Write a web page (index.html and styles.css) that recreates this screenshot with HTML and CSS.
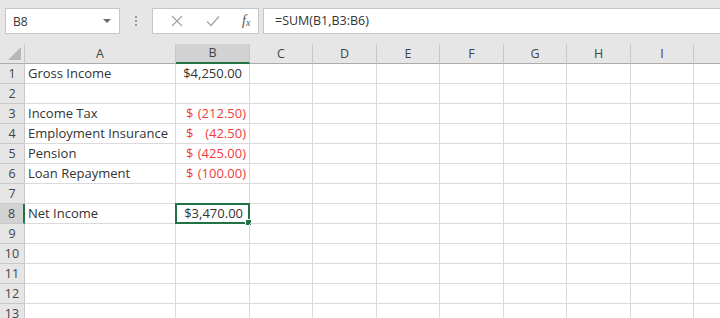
FILE: index.html
```html
<html>
    <head>
        <link rel="stylesheet" href="styles.css">
    </head>
    <body>
        <div class="toolbar">
            <div class="namebox">
                <span>B8</span>
                <svg class="arrow" width="8" height="4" viewBox="0 0 8 4"><path d="M0 0 L8 0 L4 4 Z" fill="#6a6a6a"/></svg>
            </div>
            <div class="grip">
                <i></i><i></i><i></i>
            </div>
            <div class="buttons">
                <svg class="btn" width="12" height="12" viewBox="0 0 12 12"><path d="M1 1 L11 11 M11 1 L1 11" stroke="#a6a6a6" stroke-width="1.3" fill="none"/></svg>
                <svg class="btn" width="14" height="12" viewBox="0 0 14 12"><path d="M1 6.5 L5 10.5 L13 1.5" stroke="#a6a6a6" stroke-width="1.4" fill="none"/></svg>
                <span class="fx">f<sub>x</sub></span>
            </div>
            <div class="formula">=SUM(B1,B3:B6)</div>
        </div>

        <div class="sheet">
            <div class="row head">
                <div class="cell rh corner"><span class="tri"></span></div>
                <div class="cell a">A</div>
                <div class="cell b sel">B</div>
                <div class="cell c">C</div>
                <div class="cell d">D</div>
                <div class="cell c">E</div>
                <div class="cell d">F</div>
                <div class="cell c">G</div>
                <div class="cell d">H</div>
                <div class="cell c">I</div>
                <div class="cell last"></div>
            </div>
            <div id="body"></div>
        </div>

        <script>
            const data = [
                ['Gross Income', {v: '$4,250.00'}],
                ['', null],
                ['Income Tax', {neg: '(212.50)'}],
                ['Employment Insurance', {neg: '(42.50)'}],
                ['Pension', {neg: '(425.00)'}],
                ['Loan Repayment', {neg: '(100.00)'}],
                ['', null],
                ['Net Income', {v: '$3,470.00', active: true}],
                ['', null],
                ['', null],
                ['', null],
                ['', null],
                ['', null]
            ]

            const body = document.querySelector('#body')
            let html = ''
            data.forEach((row, i) => {
                const [label, val] = row
                const active = val && val.active
                let bcell = ''
                if (val && val.neg) {
                    bcell = `<div class="cell b neg"><span>$</span><span>${val.neg}</span></div>`
                } else if (val) {
                    bcell = `<div class="cell b num${active ? ' active' : ''}">${val.v}<i class="handle"></i></div>`
                } else {
                    bcell = `<div class="cell b"></div>`
                }
                html += `<div class="row">
                    <div class="cell rh${active ? ' sel' : ''}">${i + 1}</div>
                    <div class="cell a txt">${label}</div>
                    ${bcell}
                    <div class="cell c"></div><div class="cell d"></div>
                    <div class="cell c"></div><div class="cell d"></div>
                    <div class="cell c"></div><div class="cell d"></div>
                    <div class="cell c"></div><div class="cell last"></div>
                </div>`
            })
            body.innerHTML = html
        </script>
    </body>
</html>
```

FILE: styles.css
```css
body{
    margin: 0;
    width: 720px;
    height: 318px;
    overflow: hidden;
    background: #fff;
    font-family: 'Open Sans', 'Liberation Sans', sans-serif;
}

.toolbar{
    display: flex;
    align-items: center;
    height: 44px;
    padding: 0 0 0 5px;
    background: #e6e6e6;
    box-sizing: border-box;
}

.namebox{
    width: 115px;
    height: 26px;
    background: #fff;
    border: 1px solid #c6c6c6;
    box-sizing: border-box;
    display: flex;
    align-items: center;
    justify-content: space-between;
    padding: 0 8px 0 7px;
    font-size: 12px;
    color: #333;
    margin-bottom: 2px;
}

.grip{
    width: 32px;
    display: flex;
    flex-direction: column;
    align-items: center;
    gap: 2px;
    margin-bottom: 2px;
}
.grip i{
    width: 2px;
    height: 2px;
    background: #9a9a9a;
}

.buttons{
    width: 107px;
    height: 26px;
    background: #fff;
    border: 1px solid #c6c6c6;
    box-sizing: border-box;
    display: flex;
    align-items: center;
    padding-left: 18px;
    margin-bottom: 2px;
}
.btn{
    margin-right: 23px;
}
.btn + .btn{
    margin-right: 22px;
}
.fx{
    font-family: 'Liberation Serif', 'DejaVu Serif', serif;
    font-style: italic;
    font-size: 14px;
    color: #555;
    line-height: 1;
}
.fx sub{
    font-size: 10px;
    vertical-align: -1px;
}

.formula{
    flex-grow: 1;
    height: 26px;
    margin-left: 4px;
    background: #fff;
    border: 1px solid #c6c6c6;
    border-right: none;
    box-sizing: border-box;
    padding-left: 11px;
    font-size: 12.5px;
    line-height: 24px;
    color: #333;
    margin-bottom: 2px;
}

.row{
    display: flex;
    height: 20px;
}

.cell{
    flex-shrink: 0;
    height: 20px;
    box-sizing: border-box;
    border-right: 1px solid #dadada;
    border-bottom: 1px solid #dadada;
    font-size: 13px;
    line-height: 19px;
    color: #333;
    white-space: nowrap;
    position: relative;
}

.rh{ width: 25px; background: #e6e6e6; border-color: #c8c8c8; text-align: center; font-size: 12.5px; color: #444; }
.a{ width: 151px; }
.b{ width: 74px; }
.c{ width: 63px; }
.d{ width: 64px; }
.last{ flex-grow: 1; border-right: none; }

.head .cell{
    background: #e6e6e6;
    border-right-color: #c8c8c8;
    border-bottom-color: #ababab;
    text-align: center;
    font-size: 12.5px;
    color: #444;
}
.head .sel{
    background: #d2d2d2;
    border-bottom: 2px solid #217346;
    line-height: 18px;
}
.rh.sel{
    background: #d2d2d2;
    border-right: 2px solid #217346;
}

.corner{ position: relative; }
.tri{
    position: absolute;
    right: 3px;
    bottom: 3px;
    width: 0;
    height: 0;
    border-left: 13px solid transparent;
    border-bottom: 13px solid #b6b6b6;
}

.txt{
    padding-left: 3px;
}

.num{
    text-align: right;
    padding-right: 7px;
}

.neg{
    display: flex;
    justify-content: space-between;
    padding: 0 3px 0 10px;
    color: #f03c3c;
}

.active{
    border: 2px solid #217346;
    margin-top: -1px;
    margin-left: -1px;
    width: 75px;
    height: 21px;
    line-height: 17px;
    padding-right: 5px;
}
.handle{
    display: none;
}
.active .handle{
    display: block;
    position: absolute;
    right: -4px;
    bottom: -4px;
    width: 5px;
    height: 5px;
    background: #217346;
    border: 1px solid #fff;
}
```
